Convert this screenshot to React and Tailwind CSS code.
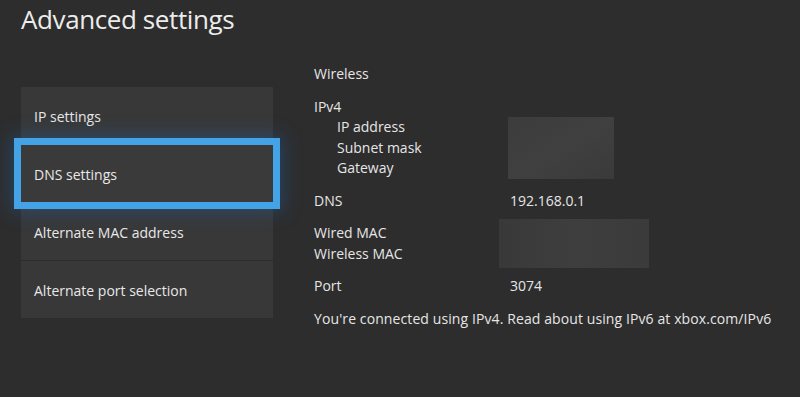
import React from "react";

const tiles = ["IP settings", "DNS settings", "Alternate MAC address", "Alternate port selection"];

const App = () => {
  return (
    <div
      className="w-[800px] h-[397px] bg-[#2d2d2d] text-[#e8e8e8] overflow-hidden relative"
      style={{ fontFamily: "'Open Sans', 'Noto Sans', sans-serif" }}
    >
      {/* Header */}
      <h1 className="absolute left-[21px] top-[0px] text-[26px] leading-[38px] tracking-[-0.4px] font-normal text-[#ececec]">
        Advanced settings
      </h1>

      <div className="flex pt-[87px] pl-[21px]">
        {/* Menu */}
        <div className="w-[252px] flex flex-col gap-[1px]">
          {tiles.map((t, i) => (
            <div
              key={t}
              className={
                i === 1
                  ? "h-[57px] bg-[#3a3a3a] flex items-center pl-[13px] pt-[2px] text-[14px] outline-[7px] outline-solid outline-[#43a3e6] shadow-[0_0_18px_9px_rgba(30,100,170,0.45)] relative z-10"
                  : "h-[57px] bg-[#383838] flex items-center pl-[13px] pt-[2px] text-[14px]"
              }
            >
              {t}
            </div>
          ))}
        </div>

        {/* Details */}
        <div className="ml-[41px] -mt-[23px] text-[14px] leading-[20.5px] text-[#e6e6e6]">
          <div>Wireless</div>

          <div className="mt-[12px]">IPv4</div>
          <div className="flex">
            <div className="w-[196px] pl-[23px]">
              <div>IP address</div>
              <div>Subnet mask</div>
              <div>Gateway</div>
            </div>
            <div className="w-[106px] -ml-[2px] bg-gradient-to-br from-[#3c3c3c] via-[#404040] to-[#3a3a3a]" />
          </div>

          <div className="flex mt-[12px]">
            <div className="w-[196px]">DNS</div>
            <div>192.168.0.1</div>
          </div>

          <div className="flex mt-[12px]">
            <div className="w-[196px]">
              <div>Wired MAC</div>
              <div>Wireless MAC</div>
            </div>
            <div className="w-[150px] -ml-[11px] -my-[4px] bg-gradient-to-r from-[#393939] via-[#3e3e3e] to-[#3b3b3b]" />
          </div>

          <div className="flex mt-[12px]">
            <div className="w-[196px]">Port</div>
            <div>3074</div>
          </div>

          <div className="mt-[12px] whitespace-nowrap tracking-[0.1px]">
            You're connected using IPv4. Read about using IPv6 at xbox.com/IPv6
          </div>
        </div>
      </div>
    </div>
  );
};

export default App;
